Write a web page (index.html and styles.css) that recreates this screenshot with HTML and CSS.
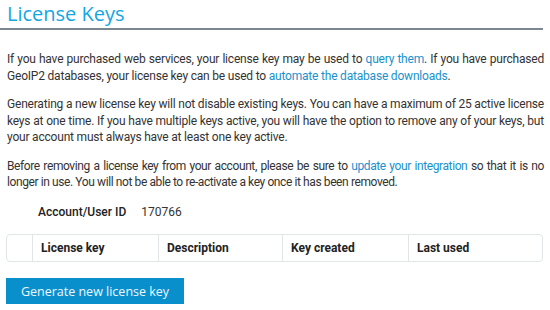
FILE: index.html
```html
<!DOCTYPE html>
<html lang="en">
<head>
    <meta charset="UTF-8">
    <title>License Keys</title>
    <link rel="stylesheet" href="styles.css">
</head>
<body>
    <div class="page">
        <h1 class="page-title">License Keys</h1>

        <p>If you have purchased web services, your license key may be used to <a href="#">query them</a>. If you have purchased GeoIP2 databases, your license key can be used to <a href="#">automate the database downloads</a>.</p>

        <p>Generating a new license key will not disable existing keys. You can have a maximum of 25 active license keys at one time. If you have multiple keys active, you will have the option to remove any of your keys, but your account must always have at least one key active.</p>

        <p class="tight">Before removing a license key from your account, please be sure to <a href="#">update your integration</a> so that it is no longer in use. You will not be able to re-activate a key once it has been removed.</p>

        <dl class="account">
            <dt>Account/User ID</dt>
            <dd>170766</dd>
        </dl>

        <table class="keys">
            <thead>
                <tr>
                    <th class="col-check"></th>
                    <th class="col-key">License key</th>
                    <th class="col-desc">Description</th>
                    <th class="col-created">Key created</th>
                    <th>Last used</th>
                </tr>
            </thead>
        </table>

        <button class="btn btn-primary">Generate new license key</button>
    </div>
</body>
</html>
```

FILE: styles.css
```css
:root {
    --title-color: #14a6e3;
    --link-color: #1a91cc;
    --text-color: #333;
    --border-color: #e2e5e8;
    --button-color: #0a8fcd;
}

body {
    margin: 0;
    padding: 0;
    font-family: Roboto, "Liberation Sans", sans-serif;
    font-size: 12px;
    line-height: 16.5px;
    color: var(--text-color);
    background: white;
}

.page {
    width: 537px;
    padding: 0 7px 0 6px;
}

.page-title {
    font-family: "Open Sans", "DejaVu Sans", sans-serif;
    font-weight: 400;
    font-size: 20px;
    line-height: 28px;
    color: var(--title-color);
    margin: 0 0 21px -6px;
    padding: 0 0 0 7px;
    border-bottom: 2px solid #7b8691;
}

p {
    margin: 0 -1px 12px 1px;
    letter-spacing: -0.2px;
    text-align: justify;
}

p.tight {
    letter-spacing: -0.4px;
}

a {
    color: var(--link-color);
    text-decoration: none;
}

.account {
    display: flex;
    gap: 15px;
    margin: 13px 0 14px 32px;
}

.account dt {
    font-weight: 500;
    color: #222;
}

.account dd {
    margin: 0;
}

.keys {
    width: 100%;
    border-collapse: separate;
    border-spacing: 0;
    border: 1px solid var(--border-color);
    border-radius: 4px;
    margin-bottom: 16px;
}

.keys th {
    text-align: left;
    font-weight: 700;
    color: #222;
    height: 26px;
    padding: 0 8px;
    border-left: 1px solid var(--border-color);
}

.keys th:first-child {
    border-left: none;
}

.col-check { width: 9px; }
.col-key { width: 109px; }
.col-desc { width: 107px; }
.col-created { width: 109px; }

.btn {
    font-family: "Open Sans", "DejaVu Sans", sans-serif;
    font-size: 12.5px;
    padding: 0;
    height: 26px;
    border: none;
    border-radius: 0;
    white-space: nowrap;
    cursor: pointer;
}

.btn-primary {
    display: block;
    background: var(--button-color);
    color: #eef7fc;
    width: 178px;
    text-align: center;
}
```
